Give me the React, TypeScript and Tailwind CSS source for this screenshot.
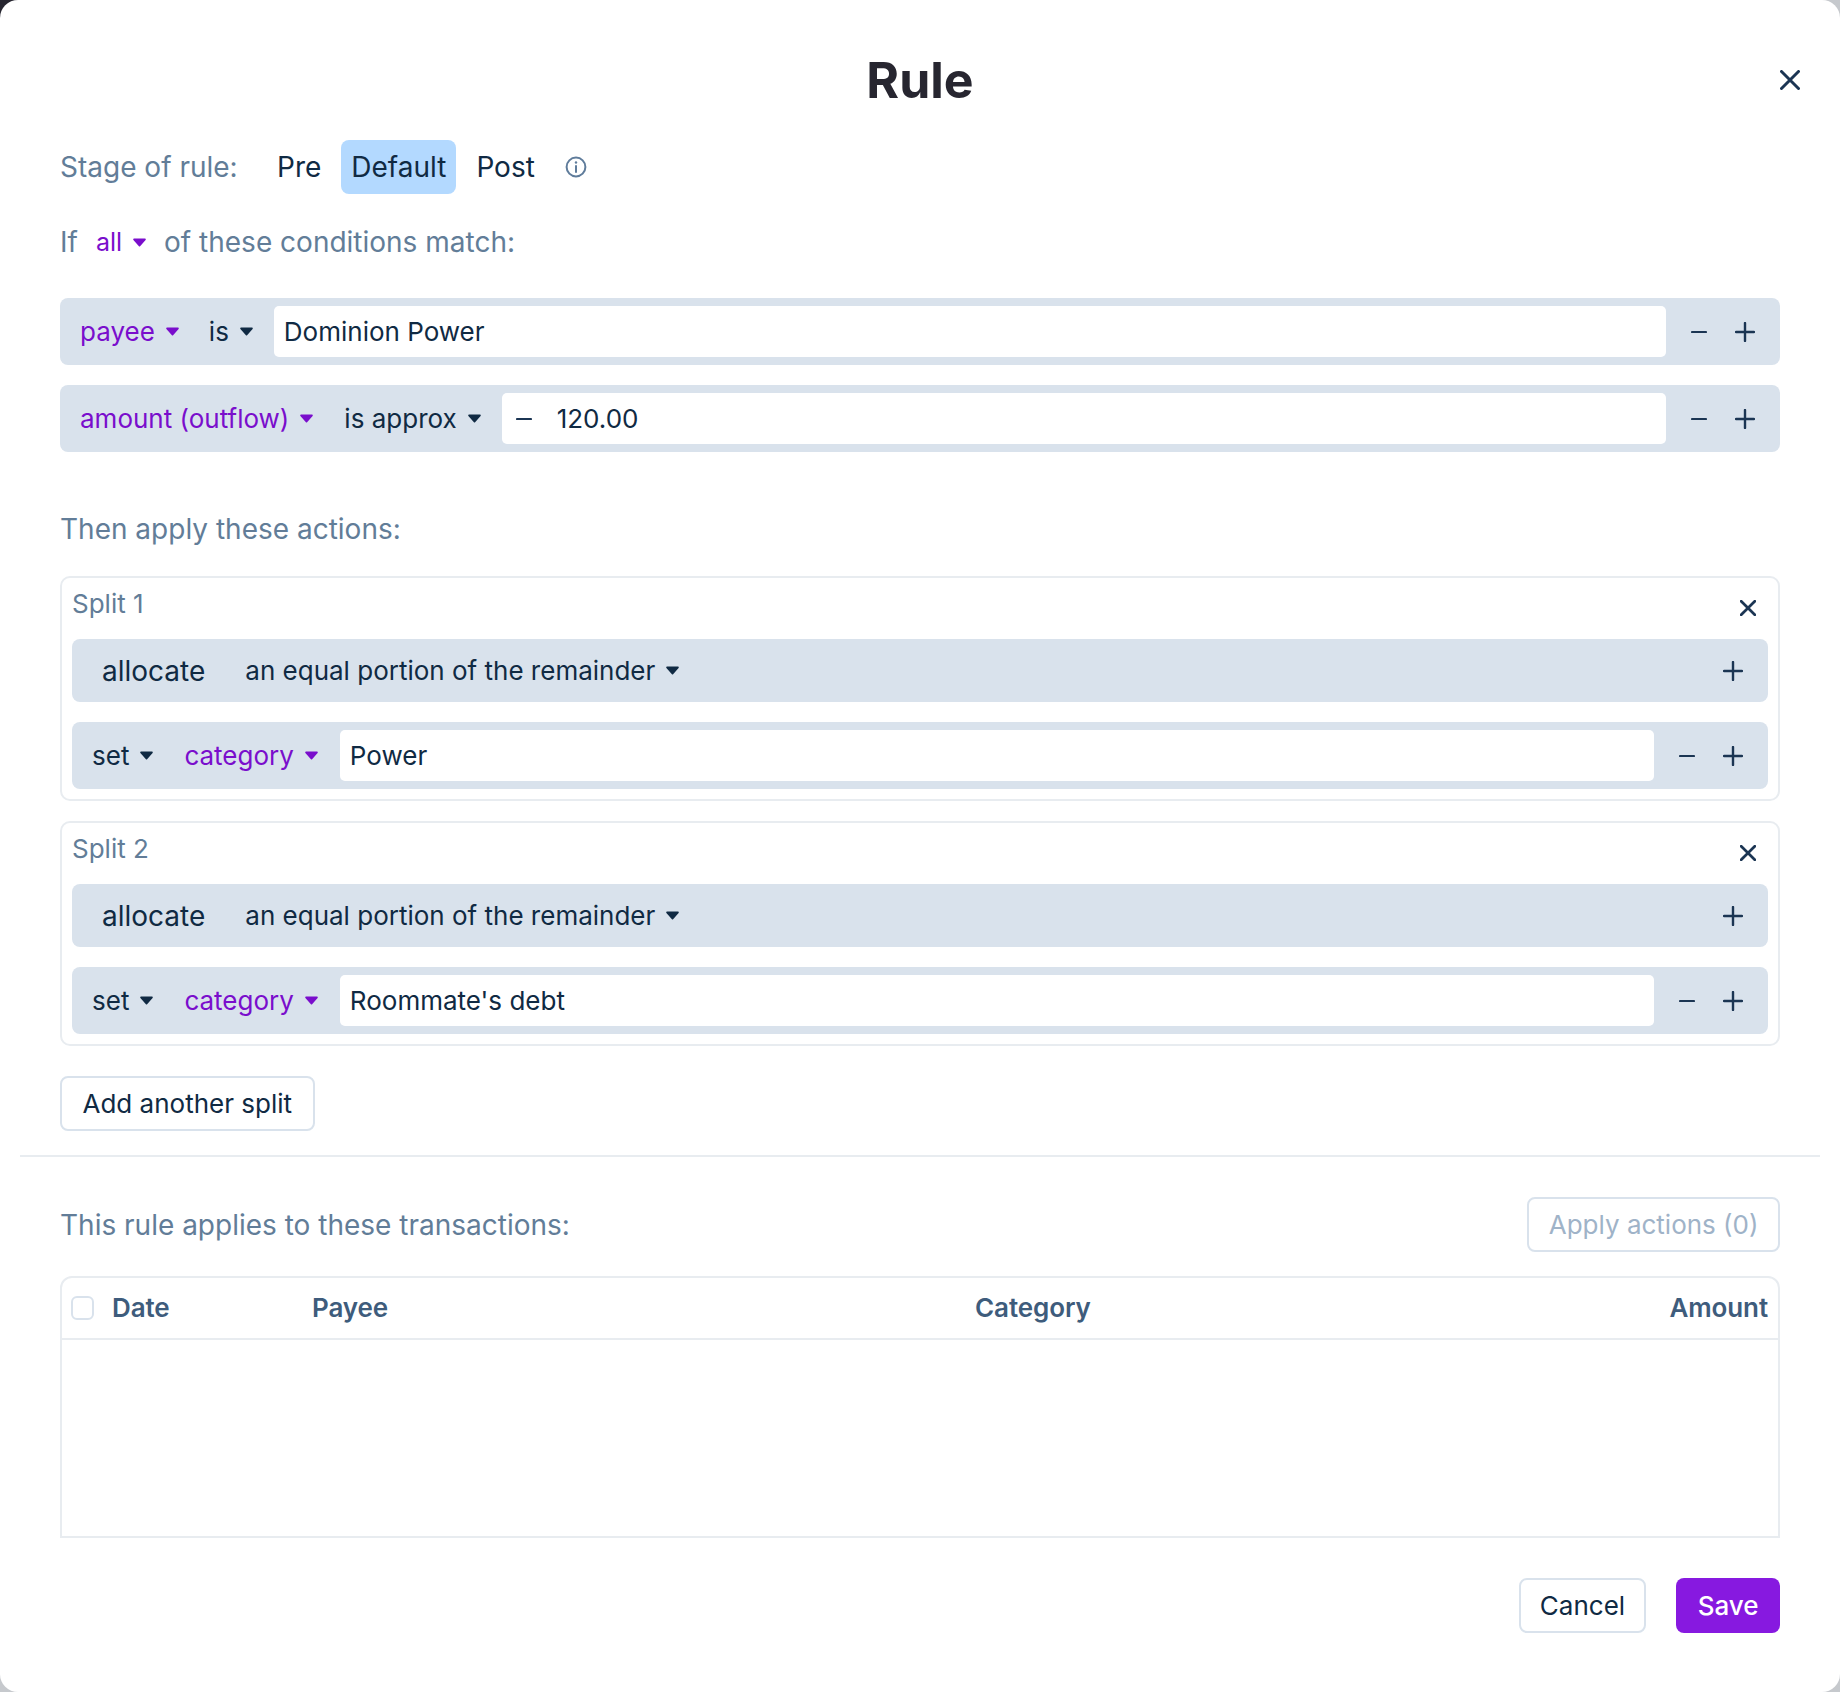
import type { ReactNode } from 'react';

const INK = 'text-[#102a43]';
const PURPLE = 'text-[#7a0ecc]';
const LABEL = 'text-[28px] text-[#627d98]';

function Caret() {
  return (
    <svg viewBox="0 0 15 9" className="ml-[10px] h-[9px] w-[15px] shrink-0">
      <path d="M2 1.4h11L7.5 7.6z" fill="currentColor" stroke="currentColor" strokeWidth="1.6" strokeLinejoin="round" />
    </svg>
  );
}

function PlusIcon() {
  return (
    <svg viewBox="0 0 20 20" className="h-[20px] w-[20px]" stroke="#1b3553" strokeWidth="2.4" strokeLinecap="round">
      <path d="M10 1v18M1 10h18" />
    </svg>
  );
}

function MinusIcon() {
  return (
    <svg viewBox="0 0 16 4" className="h-[4px] w-[16px]" stroke="#1b3553" strokeWidth="2.2" strokeLinecap="round">
      <path d="M1 2h14" />
    </svg>
  );
}

function CloseIcon({ size, weight }: { size: string; weight: string }) {
  return (
    <svg viewBox="0 0 20 20" className={size} stroke="#1b3553" strokeWidth={weight} strokeLinecap="round">
      <path d="M1.5 1.5l17 17M18.5 1.5l-17 17" />
    </svg>
  );
}

function InfoIcon() {
  return (
    <svg viewBox="0 0 22 22" className="h-[22px] w-[22px]" fill="none" stroke="#5f7c9b" strokeWidth="2" strokeLinecap="round">
      <circle cx="11" cy="11" r="9.4" />
      <path d="M11 10v6" />
      <path d="M11 6.4v.2" strokeWidth="2.4" />
    </svg>
  );
}

function Select({ label, purple, className }: { label: string; purple?: boolean; className?: string }) {
  return (
    <div className={`flex shrink-0 items-center ${purple ? PURPLE : INK} ${className ?? ''}`}>
      <span>{label}</span>
      <Caret />
    </div>
  );
}

function Input({ children }: { children: ReactNode }) {
  return (
    <div className={`flex h-[51px] min-w-0 flex-1 items-center rounded-[5px] bg-white pl-[10px] ${INK}`}>
      {children}
    </div>
  );
}

function RowButtons({ minus = true }: { minus?: boolean }) {
  return (
    <div className="flex shrink-0 items-center pl-[10px] pr-[12px]">
      {minus && (
        <div className="flex w-[46px] justify-center">
          <MinusIcon />
        </div>
      )}
      <div className="flex w-[46px] justify-center">
        <PlusIcon />
      </div>
    </div>
  );
}

function Row({ children }: { children: ReactNode }) {
  return <div className="flex h-[67px] items-center rounded-[8px] bg-[#d9e2ec]">{children}</div>;
}

function Split({ label, category }: { label: string; category: string }) {
  return (
    <div className="rounded-[10px] border-2 border-[#e8ecf0] px-[10px] pb-[10px]">
      <div className="flex h-[61px] items-start justify-between pt-[10px]">
        <span className="text-[#627d98]">{label}</span>
        <div className="mr-[12px] mt-[12px]">
          <CloseIcon size="h-[16px] w-[16px]" weight="3.4" />
        </div>
      </div>
      <div className="flex h-[63px] items-center justify-between rounded-[8px] bg-[#d9e2ec]">
        <div className={`flex items-center pl-[30px] ${INK}`}>
          <span className="text-[28px]">allocate</span>
          <Select label="an equal portion of the remainder" className="ml-[40px]" />
        </div>
        <RowButtons minus={false} />
      </div>
      <div className="mt-[20px]">
        <Row>
          <Select label="set" className="ml-[20px]" />
          <Select label="category" purple className="ml-[30px]" />
          <div className="w-[21px] shrink-0" />
          <Input>{category}</Input>
          <RowButtons />
        </Row>
      </div>
    </div>
  );
}

function OutlineButton({ children, muted, className }: { children: ReactNode; muted?: boolean; className?: string }) {
  return (
    <button className={`flex h-[55px] items-center rounded-[8px] border-2 border-[#d9e2ec] bg-white ${className ?? 'px-[20.5px]'} ${muted ? 'text-[#9fb3c8]' : INK}`}>
      {children}
    </button>
  );
}

export default function App() {
  return (
    <div className="relative h-[1692px] w-[1840px] overflow-hidden bg-[#c6c9cd] font-['Inter',sans-serif] text-[26px] leading-[32px]">
      <div className="absolute left-0 top-0 h-[20px] w-[20px] bg-[#272630]" />
      <div className="relative h-full rounded-[18px] bg-white">
        {/* Header */}
        <div className="relative flex h-[140px] justify-center pt-[49px]">
          <h1 className="text-[50px] font-bold leading-[62px] text-[#272630]">Rule</h1>
          <div className="absolute right-[40px] top-[70px]">
            <CloseIcon size="h-[20px] w-[20px]" weight="3" />
          </div>
        </div>

        <div className="px-[60px]">
          {/* Stage */}
          <div className="flex h-[54px] items-center text-[28px]">
            <span className="w-[207px] text-[#627d98]">Stage of rule:</span>
            <span className={`ml-[10px] ${INK}`}>Pre</span>
            <span className={`ml-[20px] flex h-[54px] items-center rounded-[8px] bg-[#b3d9ff] px-[10px] ${INK}`}>Default</span>
            <span className={`ml-[20px] ${INK}`}>Post</span>
            <span className="ml-[30px]">
              <InfoIcon />
            </span>
          </div>

          {/* Conditions */}
          <div className={`mt-[23px] flex h-[50px] items-center ${LABEL}`}>
            <span>If</span>
            <div className={`ml-[18px] flex items-center text-[25px] ${PURPLE}`}>
              <span>all</span>
              <Caret />
            </div>
            <span className="ml-[17px]">of these conditions match:</span>
          </div>

          <div className="mt-[31px] flex flex-col gap-[20px]">
            <Row>
              <Select label="payee" purple className="ml-[20px]" />
              <Select label="is" className="ml-[29px]" />
              <div className="w-[20px] shrink-0" />
              <Input>Dominion Power</Input>
              <RowButtons />
            </Row>
            <Row>
              <Select label="amount (outflow)" purple className="ml-[20px]" />
              <Select label="is approx" className="ml-[30px]" />
              <div className="w-[20px] shrink-0" />
              <Input>
                <span className="ml-[4px] flex w-[41px]">
                  <MinusIcon />
                </span>
                <span>120.00</span>
              </Input>
              <RowButtons />
            </Row>
          </div>

          {/* Actions */}
          <div className={`mt-[61px] ${LABEL}`}>Then apply these actions:</div>

          <div className="mt-[31px] flex flex-col gap-[20px]">
            <Split label="Split 1" category="Power" />
            <Split label="Split 2" category="Roommate's debt" />
          </div>

          <div className="mt-[30px]">
            <OutlineButton>Add another split</OutlineButton>
          </div>
        </div>

        <div className="mx-[20px] mt-[24px] h-[2px] bg-[#e8ecf0]" />

        <div className="px-[60px]">
          {/* Matching transactions */}
          <div className="mt-[40px] flex items-center justify-between">
            <span className={LABEL}>This rule applies to these transactions:</span>
            <OutlineButton muted className="px-[19.5px]">Apply actions (0)</OutlineButton>
          </div>

          <div className="mt-[24px] h-[262px] rounded-t-[12px] border-2 border-[#e8ecf0]">
            <div className="flex h-[62px] items-center border-b-2 border-[#e8ecf0] font-semibold tracking-[-0.1px] text-[#3e5c7c]">
              <div className="ml-[9px] h-[24px] w-[23px] rounded-[6px] border-2 border-[#d9e2ec] bg-white" />
              <div className="ml-[18px] w-[200px]">Date</div>
              <div className="w-[663px]">Payee</div>
              <div className="flex-1">Category</div>
              <div className="pr-[10px]">Amount</div>
            </div>
          </div>

          <div className="mt-[40px] flex justify-end gap-[30px]">
            <OutlineButton className="px-[19px]">Cancel</OutlineButton>
            <button className="flex h-[55px] items-center rounded-[8px] bg-[#8719e0] px-[21.5px] font-medium text-white">Save</button>
          </div>
        </div>
      </div>
    </div>
  );
}
